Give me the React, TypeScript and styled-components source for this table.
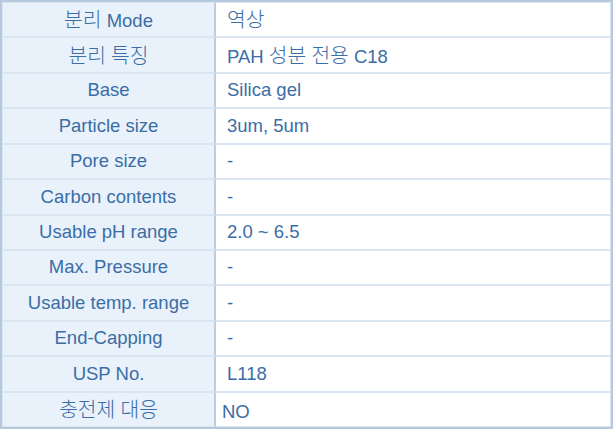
import React from "react";
import styled, { createGlobalStyle } from "styled-components";

const Global = createGlobalStyle`
  html, body { margin: 0; padding: 0; background: #ffffff; }
  body { font-family: "Liberation Sans", "Noto Sans CJK KR", Arial, sans-serif; }
`;

const Table = styled.div`
  width: 613px;
  height: 429px;
  box-sizing: border-box;
  border: 2px solid #b6c8db;
  display: grid;
  grid-template-columns: 214px 1fr;
  grid-template-rows: repeat(12, 1fr);
  font-family: "Liberation Sans", "Noto Sans CJK KR", Arial, sans-serif;
  font-size: 18.5px;
  color: #3b6da6;
`;

const Label = styled.div`
  background: #e9f2fa;
  border: 1px solid #d9e6f2;
  border-right: 2px solid #bccfe2;
  display: flex;
  align-items: center;
  justify-content: center;
  white-space: nowrap;
  line-height: 1;
`;

const Value = styled.div<{ $shift?: boolean }>`
  background: #ffffff;
  border: 1px solid #d9e6f2;
  border-left: none;
  display: flex;
  align-items: center;
  padding-left: ${(p) => (p.$shift ? "6px" : "11px")};
  padding-top: ${(p) => (p.$shift ? "5px" : "0")};
  white-space: nowrap;
  line-height: 1;
`;

const Kr = styled.span`
  font-family: "Noto Sans CJK KR", sans-serif;
  font-size: 1.1em;
  font-weight: 300;
  line-height: 1;
`;

const hangul = /([\uac00-\ud7a3]+)/;

function Text({ s }: { s: string }) {
  const parts = s.split(hangul);
  return (
    <>
      {parts.map((p, i) =>
        hangul.test(p) ? <Kr key={i}>{p}</Kr> : <React.Fragment key={i}>{p}</React.Fragment>
      )}
    </>
  );
}

const rows: [string, string, boolean?][] = [
  ["분리 Mode", "역상"],
  ["분리 특징", "PAH 성분 전용 C18"],
  ["Base", "Silica gel"],
  ["Particle size", "3um, 5um"],
  ["Pore size", "-"],
  ["Carbon contents", "-"],
  ["Usable pH range", "2.0 ~ 6.5"],
  ["Max. Pressure", "-"],
  ["Usable temp. range", "-"],
  ["End-Capping", "-"],
  ["USP No.", "L118"],
  ["충전제 대응", "NO", true],
];

export default function App() {
  return (
    <>
      <Global />
      <Table>
        {rows.map(([l, v, s]) => (
          <React.Fragment key={l}>
            <Label>
              <span><Text s={l} /></span>
            </Label>
            <Value $shift={s}>
              <span><Text s={v} /></span>
            </Value>
          </React.Fragment>
        ))}
      </Table>
    </>
  );
}
